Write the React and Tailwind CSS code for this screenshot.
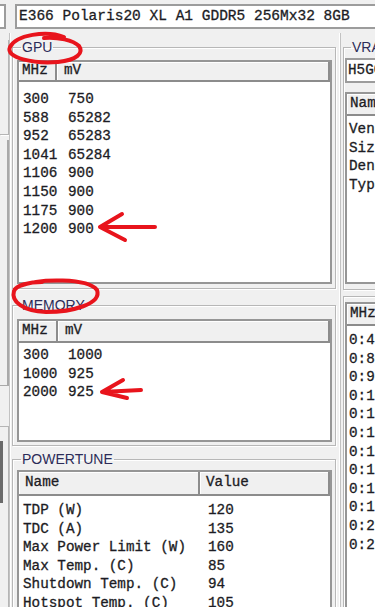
const MONO = "font-['Liberation_Mono','Courier_New',monospace] [-webkit-text-stroke:0.3px]";
const SANS = "font-['Liberation_Sans',Arial,sans-serif]";

const gpuRows = [
  ["300", "750"],
  ["588", "65282"],
  ["952", "65283"],
  ["1041", "65284"],
  ["1106", "900"],
  ["1150", "900"],
  ["1175", "900"],
  ["1200", "900"],
];

const memRows = [
  ["300", "1000"],
  ["1000", "925"],
  ["2000", "925"],
];

const powerRows = [
  ["TDP (W)", "120"],
  ["TDC (A)", "135"],
  ["Max Power Limit (W)", "160"],
  ["Max Temp. (C)", "85"],
  ["Shutdown Temp. (C)", "94"],
  ["Hotspot Temp. (C)", "105"],
];

const vramRows = ["VendorID", "Size (MB)", "Density", "Type"];
const timingRows = [
  "0:400", "0:800", "0:950", "0:1000", "0:1100", "0:1125",
  "0:1200", "0:1250", "0:1375", "0:1500", "0:2000", "0:2250",
];

function Group({ label, className = "", legendClass = "ml-[4px]", children }) {
  return (
    <fieldset
      className={`min-w-0 border border-[#b7b7b7] shadow-[inset_1px_1px_0_#fff,1px_1px_0_#fff] ${className}`}
    >
      <legend className={`${SANS} ${legendClass} px-px text-[14px] leading-[16px] text-[#2c2c58]`}>
        {label}
      </legend>
      {children}
    </fieldset>
  );
}

function HeadCell({ children, className = "" }) {
  return (
    <div
      className={`h-full border-r-2 border-b-2 border-[#8c8c8c] shadow-[inset_1px_1px_0_#fff] flex items-center ${className}`}
    >
      {children}
    </div>
  );
}

function ListBox({ className = "", children }) {
  return (
    <div className={`border-2 border-[#969696] bg-white overflow-hidden ${MONO} text-[14.3px] text-[#1c1c24] ${className}`}>
      {children}
    </div>
  );
}

function Row({ cols, a, b }) {
  return (
    <div className={`grid ${cols} pl-[4px] h-[18.6px] leading-[18.6px] whitespace-pre`}>
      <span>{a}</span>
      <span>{b}</span>
    </div>
  );
}

function Annotations() {
  return (
    <svg
      className="absolute left-0 top-0 pointer-events-none"
      width="375"
      height="607"
      viewBox="0 0 375 607"
      fill="none"
      stroke="#e8141c"
      strokeWidth="4"
      strokeLinecap="round"
      strokeLinejoin="round"
    >
      <path d="M64 37 C46 30 16 35 10 47 C5 58 34 64 58 62 C77 60 84 53 79 46 C73 40 58 37 44 38" />
      <path d="M100 227 L155 227 M100 227 L122 214 M100 227 L125 240" />
      <path d="M20 286 C40 278 88 278 97 290 C102 304 72 312 46 312 C22 311 11 301 14 291 C16 285 30 282 42 282" />
      <path d="M102 392 L141 390 M102 392 L123 380 M102 392 L127 398" />
    </svg>
  );
}

export default function App() {
  return (
    <div className="relative w-[375px] h-[607px] overflow-hidden bg-[#f0f0f0]">
      {/* top bar */}
      <div className="flex h-[33px] items-start">
        <div className="mt-[4px] h-[25px] w-[6px] shrink-0 border-y-2 border-r-2 border-[#9c9c9c] bg-white" />
        <div
          className={`ml-[9px] mt-[4px] h-[25px] w-[420px] shrink-0 border-2 border-[#9c9c9c] bg-white pl-[2px] ${MONO} text-[14.5px] leading-[21px] text-[#1c1c24] whitespace-pre`}
        >
          E366 Polaris20 XL A1 GDDR5 256Mx32 8GB
        </div>
      </div>

      <div className="flex h-[574px]">
        {/* left edge remains */}
        <div className="w-[9px] shrink-0 flex flex-col">
          <div className="mt-[7px] h-[95px] border-r border-b border-[#b5b5b5] shadow-[1px_1px_0_#fff]" />
          <div className="mt-[5px] h-[246px] border-r-2 border-b border-[#a9a9a9]" />
          <div className="mt-[40px] flex-1 border-r border-t border-[#b5b5b5] relative">
            <div className="mt-[14px] h-[62px] w-[3px] bg-[#6a6a6a]" />
          </div>
        </div>

        {/* main column */}
        <div className="w-[332px] shrink-0 border-x border-[#c2c2c2] shadow-[inset_1px_0_0_#fff,inset_-1px_0_0_#fff] flex flex-col">
          <Group label="GPU" className="mt-[6px] ml-[2px] mr-[4px] pl-[4px] pr-[3px] pt-[5px] pb-[4px]">
            <ListBox className="h-[224px]">
              <div className="flex h-[20px] bg-[#f0f0f0]">
                <HeadCell className="w-[38px] pl-[3px]">MHz</HeadCell>
                <HeadCell className="flex-1 pl-[7px]">mV</HeadCell>
              </div>
              <div className="pt-[8px]">
                {gpuRows.map(([a, b]) => (
                  <Row key={a} cols="grid-cols-[45px_1fr]" a={a} b={b} />
                ))}
              </div>
            </ListBox>
          </Group>

          <Group label="MEMORY" className="mt-[8px] ml-[2px] mr-[4px] pl-[4px] pr-[3px] pt-[6px] pb-[3px]">
            <ListBox className="h-[123px]">
              <div className="flex h-[22px] bg-[#f0f0f0]">
                <HeadCell className="w-[39px] pl-[3px]">MHz</HeadCell>
                <HeadCell className="flex-1 pl-[7px]">mV</HeadCell>
              </div>
              <div className="pt-[3px]">
                {memRows.map(([a, b]) => (
                  <Row key={a} cols="grid-cols-[45px_1fr]" a={a} b={b} />
                ))}
              </div>
            </ListBox>
          </Group>

          <Group label="POWERTUNE" className="mt-[5px] ml-[2px] mr-[4px] pl-[4px] pr-[3px] pt-[3px] flex-1">
            <ListBox className="h-[160px]">
              <div className="flex h-[24px] bg-[#f0f0f0]">
                <HeadCell className="w-[181px] pl-[6px]">Name</HeadCell>
                <HeadCell className="flex-1 pl-[6px]">Value</HeadCell>
              </div>
              <div className="pt-[5px]">
                {powerRows.map(([a, b]) => (
                  <Row key={a} cols="grid-cols-[185px_1fr] pl-[3px]" a={a} b={b} />
                ))}
              </div>
            </ListBox>
          </Group>
        </div>

        {/* right column (cut off) */}
        <div className="w-[240px] shrink-0 flex flex-col">
          <Group label="VRAM" legendClass="ml-[6px]" className="mt-[6px] ml-[2px] pl-[1px] pt-[3px] pb-[5px] h-[251px]">
            <div className={`h-[25px] border-2 border-[#9c9c9c] bg-white pl-[1px] ${MONO} text-[14.3px] leading-[21px] text-[#1c1c24]`}>
              H5GC8H24MJR
            </div>
            <ListBox className="mt-[9px] h-[192px]">
              <div className="flex h-[22px] bg-[#f0f0f0]">
                <HeadCell className="w-[120px] pl-[3px]">Name</HeadCell>
                <HeadCell className="flex-1 pl-[6px]">Value</HeadCell>
              </div>
              <div className="pt-[4px]">
                {vramRows.map((a) => (
                  <div key={a} className="pl-[2px] h-[18.6px] leading-[18.6px] whitespace-pre">{a}</div>
                ))}
              </div>
            </ListBox>
          </Group>

          <div className="mt-[6px] ml-[2px] flex-1 border-l border-t border-[#b7b7b7] shadow-[inset_1px_1px_0_#fff] pl-[1px] pt-[5px]">
            <ListBox className="h-[320px]">
              <div className="flex h-[22px] bg-[#f0f0f0]">
                <HeadCell className="w-[60px] pl-[3px]">MHz</HeadCell>
                <HeadCell className="flex-1 pl-[6px]">Timing</HeadCell>
              </div>
              <div className="pt-[5px]">
                {timingRows.map((a, i) => (
                  <div key={i} className="pl-[2px] h-[18.6px] leading-[18.6px] whitespace-pre">{a}</div>
                ))}
              </div>
            </ListBox>
          </div>
        </div>
      </div>

      <Annotations />
    </div>
  );
}
